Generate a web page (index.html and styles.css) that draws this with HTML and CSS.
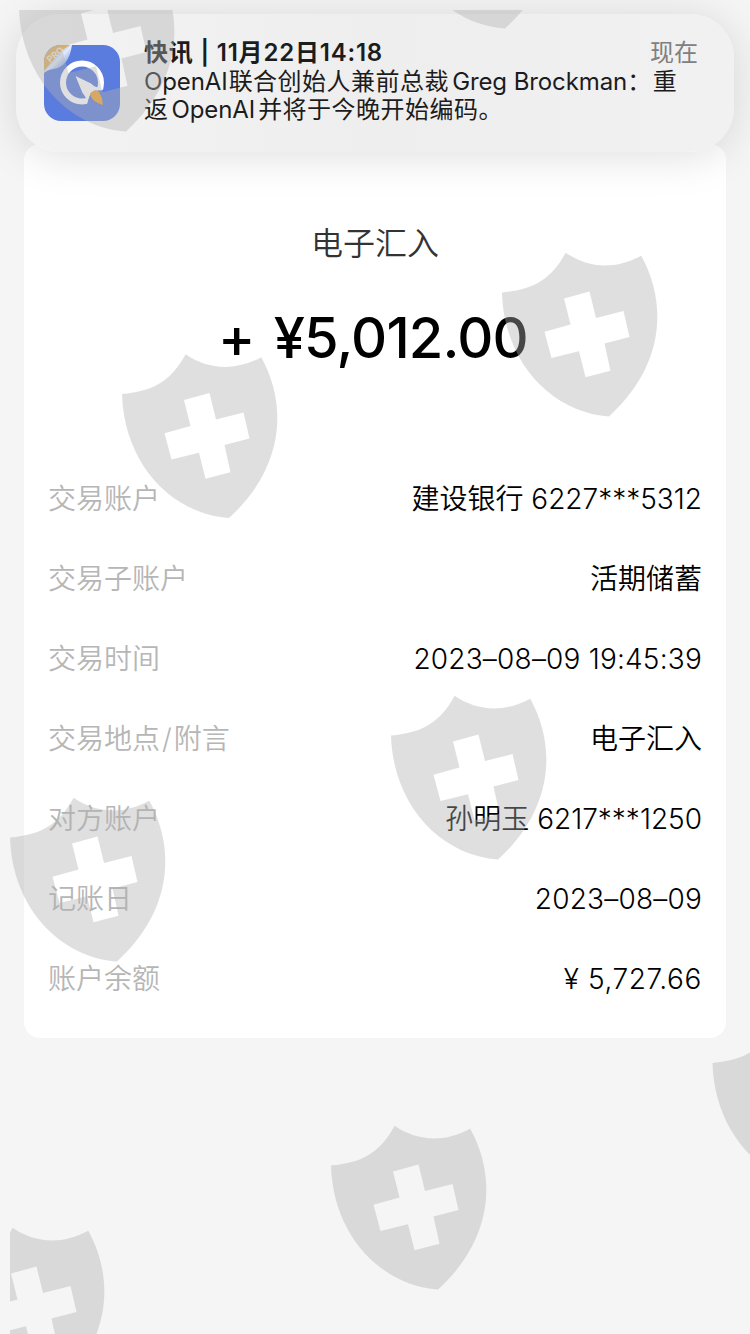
FILE: index.html
```
<!DOCTYPE html>
<html lang="zh-CN">
<head>
    <meta charset="UTF-8">
    <meta name="viewport" content="width=device-width, initial-scale=1.0">
    <title>交易详情</title>
    <link rel="stylesheet" href="styles.css">
</head>
<body>
    <div class="page">
        <div class="notice">
            <svg class="app-icon" viewBox="0 0 76 76">
                <defs>
                    <clipPath id="iconClip"><rect width="76" height="76" rx="17"/></clipPath>
                    <linearGradient id="fold" x1="0" y1="0" x2="1" y2="1">
                        <stop offset="0.3" stop-color="#7fa0e8"/>
                        <stop offset="0.5" stop-color="#e3ecfb"/>
                        <stop offset="0.75" stop-color="#8fabec"/>
                    </linearGradient>
                </defs>
                <g clip-path="url(#iconClip)">
                    <rect width="76" height="76" fill="#5b7cdf"/>
                    <circle cx="38" cy="37.5" r="19" fill="none" stroke="#fff" stroke-width="6"/>
                    <path d="M43 62 L43 55 Q44 46 53 45.5 L62 45 L64 60 Z" fill="#5b7cdf"/>
                    <path d="M31.5 31 L47 38.5 Q51 43 60.5 43.5 Q53 44 49 46.5 Q44.5 50 43.5 59 Q42.5 52 38.5 48 Z" fill="#fff"/>
                    <path d="M46 49 Q49 44 54 46 Q58 50 59 60 Q48 57 46 49 Z" fill="#f0a22e"/>
                    <path d="M0 0 H28 Q25 22 9 24 Q3 25 0 28 Z" fill="url(#fold)"/>
                    <path d="M0 0 H26 Q14 7 10 14 Q6 19 0 26 Z" fill="#dcae62"/>
                    <text class="pro" x="6" y="18" transform="rotate(-40 6 18)">PRO</text>
                </g>
            </svg>
            <div class="notice-body">
                <div class="notice-head">
                    <span class="notice-title">快讯 | 11月22日14:18</span>
                    <span class="notice-time">现在</span>
                </div>
                <div class="notice-text"><span class="latin">OpenAI</span>联合创始人兼前总裁<span class="latin">Greg Brockman</span><span class="colon">：</span>重<br>返<span class="latin">OpenAI</span>并将于今晚开始编码。</div>
            </div>
        </div>

        <div class="card">
            <div class="type">电子汇入</div>
            <div class="amount"><span class="sign">+</span>¥5,012.00</div>
            <div class="rows">
                <div class="row"><span class="label">交易账户</span><span class="value">建设银行 6227***5312</span></div>
                <div class="row"><span class="label">交易子账户</span><span class="value">活期储蓄</span></div>
                <div class="row"><span class="label">交易时间</span><span class="value date">2023–08–09 19:45:39</span></div>
                <div class="row"><span class="label">交易地点<span class="slash">/</span>附言</span><span class="value">电子汇入</span></div>
                <div class="row"><span class="label">对方账户</span><span class="value">孙明玉 6217***1250</span></div>
                <div class="row"><span class="label">记账日</span><span class="value date">2023–08–09</span></div>
                <div class="row"><span class="label">账户余额</span><span class="value balance">¥ 5,727.66</span></div>
            </div>
        </div>

        <!-- shield watermark over the whole page -->
        <svg class="watermark" viewBox="10 10 740 1324">
            <defs>
                <path id="shield" fill-rule="evenodd" d="M0 0 C32 -3 49 -13 63.7 -39.8 C85 -25 112 -22 139.3 -36.8 C166 12 162 74 107 124 C50 120 2 70 0 0 Z M62 6 L87.5 -1 L94 25.5 L121.5 18.5 L127.5 44.5 L102.5 51 L108.5 78.2 L83.5 84.8 L77 58.7 L49.5 65.5 L42.5 39.2 L68.5 32 Z"/>
            </defs>
            <use href="#shield" x="19" y="7.5"/>
            <use href="#shield" x="398" y="-95.5"/>
            <use href="#shield" x="502" y="292.5"/>
            <use href="#shield" x="122" y="394"/>
            <use href="#shield" x="391" y="735.5"/>
            <use href="#shield" x="10" y="837.5"/>
            <use href="#shield" x="712.5" y="1063"/>
            <use href="#shield" x="331" y="1165.5"/>
            <use href="#shield" x="-51" y="1267.5"/>
        </svg>
    </div>
</body>
</html>
```
FILE: styles.css
```
* {
    box-sizing: border-box;
}
body {
    margin: 0;
    background-color: #f5f5f5;
    font-family: Inter, "Noto Sans CJK SC", sans-serif;
    color: #000;
}
.page {
    position: relative;
    height: 1334px;
    padding-top: 14px;
    overflow: hidden;
}
.notice {
    position: relative;
    z-index: 1;
    display: flex;
    height: 138px;
    margin: 0 16px;
    padding: 25px 36px 0 28px;
    border-radius: 44px;
    background: linear-gradient(90deg, #f3f3f3, #eeeeee 50%, #f1f1f1);
    box-shadow: 0 4px 44px rgba(0, 0, 0, 0.13);
}
.app-icon {
    width: 76px;
    height: 76px;
    margin-top: 6px;
    flex: none;
}
.pro {
    font-size: 9px;
    font-weight: 700;
    fill: #f5e6c8;
}
.notice-body {
    flex: 1;
    margin-left: 24px;
    font-size: 24px;
    line-height: 28.5px;
    white-space: nowrap;
    color: #1c1c1c;
}
.notice-head {
    display: flex;
    justify-content: space-between;
}
.notice-title {
    font-weight: 600;
    letter-spacing: 0.8px;
}
.notice-time {
    color: #808080;
}
.notice-text {
    letter-spacing: 0.5px;
}
.latin {
    margin: 0 3px;
    letter-spacing: -0.1px;
}
.latin:first-child {
    margin: 0 1px 0 0;
}
.colon {
    margin: 0 1px 0 -3px;
}
.card {
    height: 894px;
    margin: -8px 24px 0;
    padding: 77px 24px 0;
    border-radius: 16px;
    background-color: #fff;
}
.type {
    font-size: 32px;
    font-weight: 350;
    line-height: 46px;
    text-align: center;
    color: #333;
}
.amount {
    margin-top: 33px;
    padding-right: 4px;
    font-size: 56px;
    font-weight: 500;
    line-height: 76px;
    letter-spacing: -0.8px;
    text-align: center;
}
.sign {
    margin-right: 19px;
}
.rows {
    margin-top: 83px;
}
.row {
    display: flex;
    justify-content: space-between;
    height: 80px;
    font-size: 28px;
    line-height: 80px;
}
.label {
    font-weight: 350;
    color: #b6b6b6;
}
.slash {
    margin: 0 2px;
}
.value {
    font-weight: 350;
}
.date {
    letter-spacing: 0.2px;
}
.balance {
    letter-spacing: 0.6px;
}
.watermark {
    position: absolute;
    z-index: 2;
    top: 10px;
    left: 10px;
    width: 740px;
    height: 1324px;
    fill: #b1b1b1;
    opacity: 0.4;
}
```
